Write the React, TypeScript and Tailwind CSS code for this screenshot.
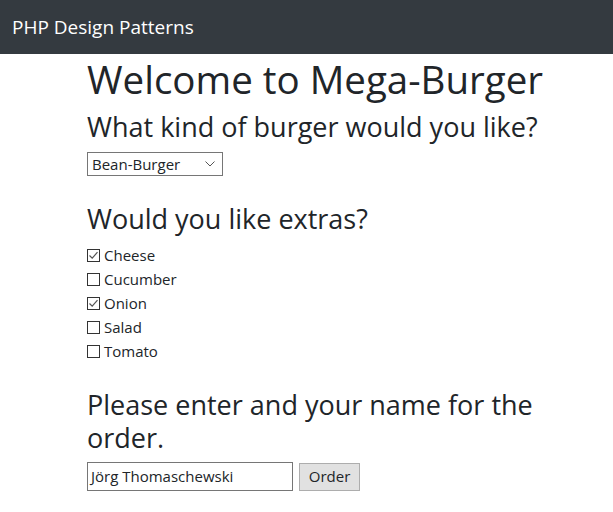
import React from "react";

const font = { fontFamily: '"Open Sans", "Noto Sans", sans-serif' };

function Box({ checked }: { checked: boolean }) {
  return (
    <span className="inline-flex h-[13px] w-[13px] shrink-0 items-center justify-center border border-[#333] bg-white">
      {checked && (
        <svg width="11" height="11" viewBox="0 0 11 11" fill="none">
          <path d="M1.5 5.5 L4.2 8.2 L9.5 2.2" stroke="#555" strokeWidth="1.2" />
        </svg>
      )}
    </span>
  );
}

const extras: [string, boolean][] = [
  ["Cheese", true],
  ["Cucumber", false],
  ["Onion", true],
  ["Salad", false],
  ["Tomato", false],
];

export default function App() {
  return (
    <div className="min-h-[512px] bg-white text-[#212529]" style={font}>
      <nav className="flex h-[54px] items-center bg-[#343a40] px-3">
        <span className="text-[19px] text-white">PHP Design Patterns</span>
      </nav>
      <main className="pl-[87px]">
        <div className="w-[480px]">
          <h1 className="mt-[2px] whitespace-nowrap text-[38.5px] leading-[46px]">Welcome to Mega-Burger</h1>
          <h3 className="mt-[9px] whitespace-nowrap text-[27px] leading-[32px]">What kind of burger would you like?</h3>
          <div className="mt-[9px] flex h-[24px] w-[136px] items-center justify-between border border-[#767676] pl-[4px] pr-[7px] text-[15px]">
            <span>Bean-Burger</span>
            <svg width="10" height="6" viewBox="0 0 10 6" fill="none">
              <path d="M0.5 0.5 L5 5 L9.5 0.5" stroke="#555" strokeWidth="1" />
            </svg>
          </div>
          <h3 className="mt-[27px] text-[27px] leading-[32px]">Would you like extras?</h3>
          <div className="mt-[8px] flex flex-col">
            {extras.map(([name, c]) => (
              <label key={name} className="flex h-[24px] items-center gap-[4px] text-[15px]">
                <Box checked={c} />
                <span>{name}</span>
              </label>
            ))}
          </div>
          <h3 className="mt-[25px] text-[27px] leading-[33px]">
            Please enter and your name for the order.
          </h3>
          <div className="mt-[8px] flex items-center gap-[6px] text-[15px]">
            <div className="flex h-[29px] w-[206px] items-center border border-[#767676] px-[3px]">Jörg Thomaschewski</div>
            <button className="h-[28px] w-[61px] border border-[#adadad] bg-[#e1e1e1] text-[15px]">Order</button>
          </div>
        </div>
      </main>
    </div>
  );
}
